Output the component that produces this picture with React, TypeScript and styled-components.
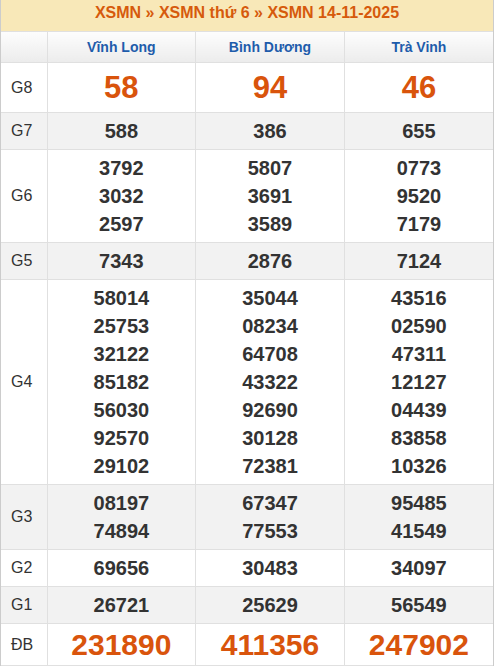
import styled, { createGlobalStyle } from "styled-components";

const GlobalStyle = createGlobalStyle`
  html, body {
    margin: 0;
    padding: 0;
    background: #fff;
    font-family: "Liberation Sans", Arial, sans-serif;
  }
`;

const Wrapper = styled.div`
  width: 494px;
  box-sizing: border-box;
  border-left: 1px solid #ccc;
  border-right: 1px solid #ccc;
`;

const Title = styled.div`
  height: 32px;
  line-height: 25px;
  background: #f8e8b8;
  text-align: center;
  font-size: 16px;
  font-weight: bold;
  color: #d65a0c;
  border-bottom: 1px solid #e0e0e0;
  box-sizing: border-box;
`;

const Table = styled.table`
  width: 100%;
  border-collapse: collapse;
  table-layout: fixed;
`;

const HeadCell = styled.th`
  height: 30px;
  padding: 0;
  font-size: 14px;
  font-weight: bold;
  color: #1e5cab;
  background: linear-gradient(#fdfdfd, #ececec);
  border: 1px solid #e0e0e0;
  border-top: none;
  text-align: center;
  &:first-child {
    border-left: none;
  }
  &:last-child {
    border-right: none;
  }
`;

const Row = styled.tr<{ $alt?: boolean }>`
  background: ${(p) => (p.$alt ? "#f2f2f2" : "#fff")};
`;

const Label = styled.td`
  padding: 0 0 0 10px;
  font-size: 16px;
  color: #333;
  border: 1px solid #e0e0e0;
  border-left: none;
`;

const Cell = styled.td<{ $size?: number; $lh?: number }>`
  padding: 4px 0;
  text-align: center;
  vertical-align: middle;
  font-weight: bold;
  font-size: ${(p) => p.$size ?? 20}px;
  line-height: ${(p) => p.$lh ?? 28}px;
  color: ${(p) => (p.$size ? "#d9540c" : "#333")};
  border: 1px solid #e0e0e0;
  &:last-child {
    border-right: none;
  }
`;

const Num = styled.div``;

type Prize = { label: string; values: string[][]; size?: number; lh?: number };

const provinces = ["Vĩnh Long", "Bình Dương", "Trà Vinh"];

const prizes: Prize[] = [
  { label: "G8", values: [["58"], ["94"], ["46"]], size: 31, lh: 41 },
  { label: "G7", values: [["588"], ["386"], ["655"]] },
  {
    label: "G6",
    values: [
      ["3792", "3032", "2597"],
      ["5807", "3691", "3589"],
      ["0773", "9520", "7179"],
    ],
  },
  { label: "G5", values: [["7343"], ["2876"], ["7124"]] },
  {
    label: "G4",
    values: [
      ["58014", "25753", "32122", "85182", "56030", "92570", "29102"],
      ["35044", "08234", "64708", "43322", "92690", "30128", "72381"],
      ["43516", "02590", "47311", "12127", "04439", "83858", "10326"],
    ],
  },
  {
    label: "G3",
    values: [
      ["08197", "74894"],
      ["67347", "77553"],
      ["95485", "41549"],
    ],
  },
  { label: "G2", values: [["69656"], ["30483"], ["34097"]] },
  { label: "G1", values: [["26721"], ["25629"], ["56549"]] },
  { label: "ĐB", values: [["231890"], ["411356"], ["247902"]], size: 30, lh: 33 },
];

export default function App() {
  return (
    <>
      <GlobalStyle />
      <Wrapper>
        <Title>XSMN » XSMN thứ 6 » XSMN 14-11-2025</Title>
        <Table>
          <colgroup>
            <col style={{ width: 46 }} />
            <col />
            <col />
            <col />
          </colgroup>
          <thead>
            <tr>
              <HeadCell />
              {provinces.map((p) => (
                <HeadCell key={p}>{p}</HeadCell>
              ))}
            </tr>
          </thead>
          <tbody>
            {prizes.map((prize, i) => (
              <Row key={prize.label} $alt={i % 2 === 1}>
                <Label>{prize.label}</Label>
                {prize.values.map((col, j) => (
                  <Cell key={j} $size={prize.size} $lh={prize.lh}>
                    {col.map((v, k) => (
                      <Num key={k}>{v}</Num>
                    ))}
                  </Cell>
                ))}
              </Row>
            ))}
          </tbody>
        </Table>
      </Wrapper>
    </>
  );
}
